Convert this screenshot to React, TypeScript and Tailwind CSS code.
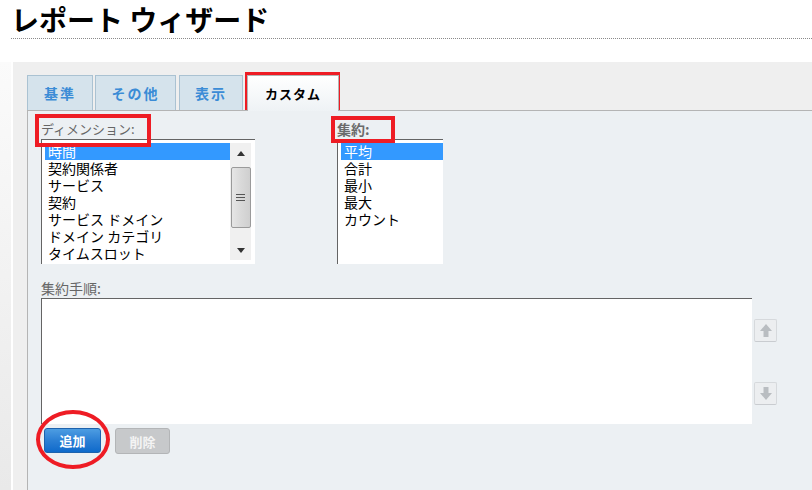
import React from "react";

const dimensions = ["時間", "契約関係者", "サービス", "契約", "サービス ドメイン", "ドメイン カテゴリ", "タイムスロット"];
const aggregates = ["平均", "合計", "最小", "最大", "カウント"];

function ListBox({ items, width, scroll }: { items: string[]; width: string; scroll?: boolean }) {
  return (
    <div className={`${width} h-[125px] bg-white border-t border-l border-[#646464] flex`}>
      <div className="flex-1 pt-[3px] pl-[3px]">
        {items.map((item, i) => (
          <div
            key={item}
            className={`h-[17px] leading-[17px] text-[14px] pl-[3px] whitespace-nowrap ${
              i === 0 ? "bg-[#3399ff] text-white" : "text-black"
            }`}
          >
            {item}
          </div>
        ))}
      </div>
      {scroll && (
        <div className="w-[21px] mt-[3px] mb-[4px] mr-[4px] bg-[#f0f0f0] flex flex-col items-center">
          <div className="h-[20px] flex items-center justify-center">
            <svg width="8" height="5" viewBox="0 0 8 5">
              <path d="M4 0 L8 5 L0 5 Z" fill="#333" />
            </svg>
          </div>
          <div className="w-[20px] h-[61px] mt-[4px] rounded-[2px] border border-[#9a9a9a] bg-gradient-to-r from-[#e6e6e6] via-[#d9d9d9] to-[#cfcfcf] flex flex-col items-center justify-center gap-[2px]">
            <div className="w-[9px] h-px bg-[#555]" />
            <div className="w-[9px] h-px bg-[#555]" />
            <div className="w-[9px] h-px bg-[#555]" />
          </div>
          <div className="flex-1" />
          <div className="h-[20px] flex items-center justify-center">
            <svg width="8" height="5" viewBox="0 0 8 5">
              <path d="M0 0 L8 0 L4 5 Z" fill="#333" />
            </svg>
          </div>
        </div>
      )}
    </div>
  );
}

function MoveButton({ down }: { down?: boolean }) {
  return (
    <div className="w-[23px] h-[23px] rounded-[2px] border border-[#d6d9dc] border-b-[#c9ccd0] bg-[#eceef0] flex items-center justify-center">
      <svg width="12" height="13" viewBox="0 0 12 13">
        {down ? (
          <path d="M3.5 0 H8.5 V6 H12 L6 13 L0 6 H3.5 Z" fill="#b9bdc1" />
        ) : (
          <path d="M6 0 L12 7 H8.5 V13 H3.5 V7 H0 Z" fill="#b9bdc1" />
        )}
      </svg>
    </div>
  );
}

export default function App() {
  return (
    <div className="w-[812px] h-[490px] bg-white overflow-hidden relative font-['Noto_Sans_CJK_JP',sans-serif]">
      <div className="ml-[11px] h-[39px] border-b border-dotted border-[#8a8a8a]">
        <h1 className="text-[28px] leading-[38px] font-bold text-black">レポート ウィザード</h1>
      </div>

      <div className="flex mt-[23px] h-[428px]">
        <div className="w-[11px] bg-gradient-to-b from-[#fbfbfb] to-[#e9e9e9]" />
        <div className="w-[2px] bg-white" />
        <div className="flex-1 bg-[#efefef] pl-[14px] pt-[13px] flex flex-col">
          <div className="flex items-end h-[35px]">
            <div className="w-[66px] h-[35px] bg-[#d5e3ec] border border-b-0 border-[#aac2d2] flex items-center justify-center text-[14px] font-bold text-[#3b8cd6] tracking-[2px]">
              基準
            </div>
            <div className="w-[81px] h-[35px] ml-[2px] bg-[#d5e3ec] border border-b-0 border-[#aac2d2] flex items-center justify-center text-[14px] font-bold text-[#3b8cd6] tracking-[2px]">
              その他
            </div>
            <div className="w-[64px] h-[35px] ml-[3px] bg-[#d5e3ec] border border-b-0 border-[#aac2d2] flex items-center justify-center text-[14px] font-bold text-[#3b8cd6] tracking-[2px]">
              表示
            </div>
            <div className="relative z-10 w-[92px] h-[36px] -mb-px ml-[4px] bg-gradient-to-b from-white to-[#eef2f5] border border-b-0 border-[#b4b4b4] flex items-center justify-center text-[13px] font-bold text-black tracking-[1px]">
              カスタム
            </div>
          </div>

          <div className="flex-1 bg-[#ecf0f3] border-l border-t border-[#b4b4b4] pl-[13px]">
            <div className="flex">
              <div>
                <div className="h-[28px] pt-[10px] text-[13px] leading-[16px] text-[#666]">ディメンション:</div>
                <ListBox items={dimensions} width="w-[214px]" scroll />
              </div>
              <div className="ml-[82px]">
                <div className="h-[28px] pt-[10px] text-[14px] leading-[16px] font-bold text-[#6b6b6b]">集約:</div>
                <ListBox items={aggregates} width="w-[106px]" />
              </div>
            </div>

            <div className="h-[34px] pt-[16px] text-[14px] leading-[16px] text-[#666]">集約手順:</div>
            <div className="flex">
              <div className="w-[711px] h-[126px] bg-white border-t border-l border-[#646464]" />
              <div className="ml-[2px] pt-[21px] flex flex-col gap-[40px]">
                <MoveButton />
                <MoveButton down />
              </div>
            </div>

            <div className="flex items-start mt-[4px]">
              <button className="ml-[3px] w-[57px] h-[25px] rounded-[3px] border border-[#1d62ad] bg-gradient-to-b from-[#4d9de2] via-[#2b7fd4] to-[#0d6acb] text-white text-[13px] font-bold leading-none">
                追加
              </button>
              <button className="ml-[14px] w-[55px] h-[26px] rounded-[3px] border border-[#b3b5b7] bg-[#c7c9cb] text-[#f4f4f4] text-[13px] font-bold leading-none">
                削除
              </button>
            </div>
          </div>
        </div>
      </div>

      {/* annotations */}
      <div className="absolute left-[245px] top-[72px] w-[95px] h-[38px] border-[4px] border-[#ee1c24] pointer-events-none" />
      <div className="absolute left-[35px] top-[114px] w-[116px] h-[33px] border-[4px] border-[#ee1c24] pointer-events-none" />
      <div className="absolute left-[331px] top-[116px] w-[64px] h-[27px] border-[4px] border-[#ee1c24] pointer-events-none" />
      <div className="absolute left-[36px] top-[410px] w-[74px] h-[59px] border-[4px] border-[#ee1c24] rounded-[50%] pointer-events-none" />
    </div>
  );
}
